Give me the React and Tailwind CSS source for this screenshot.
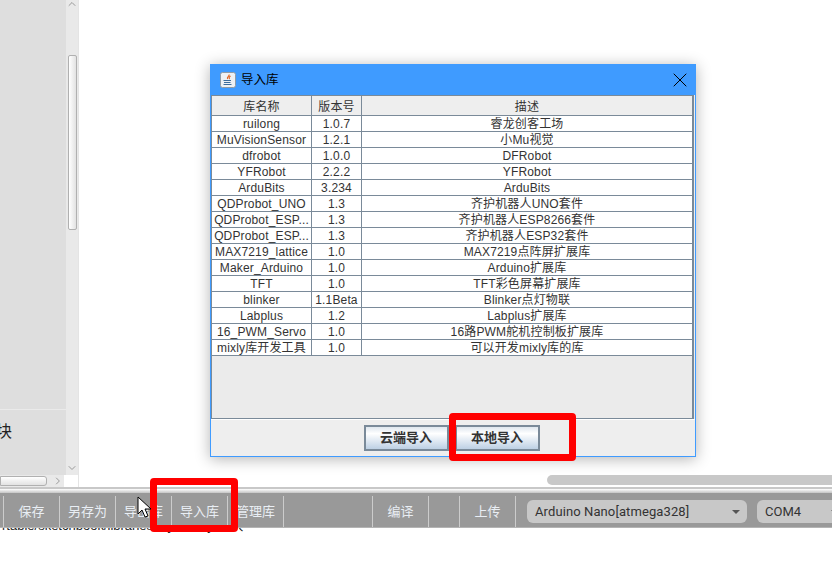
import { ChevronDown, ChevronRight, ChevronUp, X } from "lucide-react";

const libs = [
  ["ruilong", "1.0.7", "睿龙创客工场"],
  ["MuVisionSensor", "1.2.1", "小Mu视觉"],
  ["dfrobot", "1.0.0", "DFRobot"],
  ["YFRobot", "2.2.2", "YFRobot"],
  ["ArduBits", "3.234", "ArduBits"],
  ["QDProbot_UNO", "1.3", "齐护机器人UNO套件"],
  ["QDProbot_ESP...", "1.3", "齐护机器人ESP8266套件"],
  ["QDProbot_ESP...", "1.3", "齐护机器人ESP32套件"],
  ["MAX7219_lattice", "1.0", "MAX7219点阵屏扩展库"],
  ["Maker_Arduino", "1.0", "Arduino扩展库"],
  ["TFT", "1.0", "TFT彩色屏幕扩展库"],
  ["blinker", "1.1Beta", "Blinker点灯物联"],
  ["Labplus", "1.2", "Labplus扩展库"],
  ["16_PWM_Servo", "1.0", "16路PWM舵机控制板扩展库"],
  ["mixly库开发工具", "1.0", "可以开发mixly库的库"],
];

const leftTools = ["保存", "另存为", "导出库", "导入库", "管理库"];

function JavaIcon() {
  return (
    <svg width="16" height="16" viewBox="0 0 16 16">
      <rect x="0.5" y="0.5" width="15" height="15" rx="2" fill="#eef1f4" stroke="#8f9ba6" />
      <path d="M9 2.5c1 1.5-2.5 2.5-1.5 4.5M10.5 4c-1.5 1-2 2-.8 3" fill="none" stroke="#e2611c" strokeWidth="1.1" />
      <path d="M3.5 8.5h7.5M4 10.5h6.5M3.5 12.5h8" stroke="#3c6c9c" strokeWidth="1" />
    </svg>
  );
}

function DialogButton({ children }) {
  return (
    <button className="w-[85px] h-[26px] border-2 border-[#7a8a99] bg-linear-to-b from-[#dfe7ef] via-white via-30% to-[#bdd0e4] text-[13px] font-bold text-[#333]">
      {children}
    </button>
  );
}

function ToolButton({ children }) {
  return (
    <div className="w-[56px] shrink-0 h-[31px] pb-[2px] border-r border-[#cccccc] flex items-center justify-center text-[#e9eef4]">
      {children}
    </div>
  );
}

function Caret() {
  return <div className="w-0 h-0 shrink-0 border-x-[4px] border-x-transparent border-t-[4px] border-t-[#555]" />;
}

export default function App() {
  return (
    <div className="relative w-[832px] h-[581px] overflow-hidden bg-white flex flex-col font-['Liberation_Sans','Noto_Sans_CJK_SC',sans-serif]">
      {/* top area */}
      <div className="h-[487px] flex shrink-0">
        <div className="w-[78px] flex flex-col border-r border-[#e4e4e4] box-content">
          <div className="h-[475px] flex">
            <div className="w-[66px] bg-[#dedede] overflow-hidden pt-[409px]">
              <div className="border-t border-[#eaeaea] pt-[10px] -ml-[4px] text-[16px] leading-[20px] text-[#222] font-['Noto_Sans_CJK_SC',sans-serif]">
                块
              </div>
            </div>
            <div className="w-[12px] bg-[#e9e9e9] flex flex-col items-center">
              <ChevronUp size={12} strokeWidth={2} className="text-[#999] -mt-[2px]" />
              <div className="mt-[45px] w-[9px] h-[175px] rounded-[2px] border border-[#b0b0b0] bg-linear-to-r from-white to-[#e2e2e2]" />
              <div className="flex-1" />
              <ChevronDown size={12} strokeWidth={2} className="text-[#999] mb-[1px]" />
            </div>
          </div>
          <div className="h-[12px] flex">
            <div className="w-[64px] bg-[#e9e9e9] flex items-center">
              <div className="w-[48px] h-[10px] rounded-r-[3px] border border-[#b0b0b0] bg-linear-to-b from-white to-[#e2e2e2]" />
              <ChevronRight size={12} strokeWidth={2} className="text-[#999] ml-[5px]" />
            </div>
          </div>
        </div>
        <div className="flex-1 flex flex-col justify-end pl-[468px] pb-[2px]">
          <div className="h-[10px] rounded-l-[5px] bg-[#c8c8c8]" />
        </div>
      </div>

      {/* splitter */}
      <div className="h-[6px] shrink-0 border-t-2 border-[#c8c8c8] bg-linear-to-b from-white to-[#c4c4c4]" />

      {/* toolbar */}
      <div className="relative z-10 h-[35px] shrink-0 pt-[3px] bg-[#999999] border-b border-[#b4b4b4] flex items-center text-[13px] font-['Noto_Sans_CJK_SC',sans-serif]">
        <div className="w-[4px] shrink-0 h-[31px] border-r border-[#cccccc]" />
        {leftTools.map((t) => (
          <ToolButton key={t}>{t}</ToolButton>
        ))}
        <div className="w-[89px] shrink-0 h-[31px] border-r border-[#cccccc]" />
        <ToolButton>编译</ToolButton>
        <div className="w-[31px] shrink-0 h-[31px] border-r border-[#cccccc]" />
        <ToolButton>上传</ToolButton>
        <div className="ml-[11px] w-[220px] shrink-0 h-[23px] rounded-[6px] bg-[#c8c8c8] flex items-center justify-between pl-[8px] pr-[7px] text-[#333] tracking-[0.1px] font-['Roboto',sans-serif]">
          <span>Arduino Nano[atmega328]</span>
          <Caret />
        </div>
        <div className="ml-[10px] w-[80px] shrink-0 h-[23px] rounded-[6px] bg-[#c8c8c8] flex items-center pl-[8px] text-[#333] font-['Roboto',sans-serif]">
          <span className="w-[66px] shrink-0">COM4</span>
          <Caret />
        </div>
      </div>

      {/* console, cut off by the toolbar */}
      <div className="flex-1 overflow-hidden pl-[2px]">
        <div className="-mt-[10px] text-[13px] leading-[15px] text-[#222] whitespace-nowrap">
          rtable/sketchbook/libraries/myLibrary 导入
        </div>
      </div>

      {/* dialog */}
      <div className="absolute z-20 left-[210px] top-[64px] w-[486px] h-[393px] border border-[#3f9bff] bg-[#eeeeee] shadow-[0_2px_14px_rgba(0,0,0,0.3)] flex flex-col">
        <div className="h-[30px] shrink-0 bg-[#3f9bff] flex items-center pl-[9px] pr-[3px]">
          <JavaIcon />
          <span className="ml-[5px] text-[12.5px] text-black">导入库</span>
          <X size={24} strokeWidth={1} className="ml-auto text-black" />
        </div>
        <div className="h-[324px] shrink-0 mr-[1px] border-l border-r-2 border-b border-[#7a8a99] bg-[#ebebeb] text-[12px] leading-[15px] text-[#333] tracking-[0.15px]">
          <div className="h-[21px] flex bg-[#eeeeee] border-b border-t border-[#7a8a99]">
            <div className="w-[100px] border-r border-[#7a8a99] text-center pt-[4px]">库名称</div>
            <div className="w-[50px] border-r border-[#7a8a99] text-center pt-[4px]">版本号</div>
            <div className="flex-1 text-center pt-[4px]">描述</div>
          </div>
          {libs.map((lib, i) => (
            <div key={i} className="h-[16px] flex bg-white border-b border-[#7a8a99] leading-[17px] whitespace-nowrap overflow-hidden">
              <div className="w-[100px] border-r border-[#7a8a99] text-center">{lib[0]}</div>
              <div className="w-[50px] border-r border-[#7a8a99] text-center">{lib[1]}</div>
              <div className="flex-1 text-center">{lib[2]}</div>
            </div>
          ))}
        </div>
        <div className="flex-1 border-t border-white flex justify-center gap-[6px] pt-[5px] pr-[3px]">
          <DialogButton>云端导入</DialogButton>
          <DialogButton>本地导入</DialogButton>
        </div>
      </div>

      {/* red highlights */}
      <div className="absolute z-30 left-[449px] top-[413px] w-[127px] h-[48px] border-[7px] border-[#ff0000] rounded-[4px]" />
      <div className="absolute z-30 left-[150px] top-[478px] w-[88px] h-[54px] border-[7px] border-[#ff0000] rounded-[4px]" />

      {/* mouse cursor */}
      <svg className="absolute z-30 left-[137px] top-[496px]" width="16" height="23" viewBox="0 0 16 23">
        <path d="M1 1v17l4-4 3 7 3-1-3-7h6z" fill="white" stroke="black" strokeWidth="1" />
      </svg>
    </div>
  );
}
